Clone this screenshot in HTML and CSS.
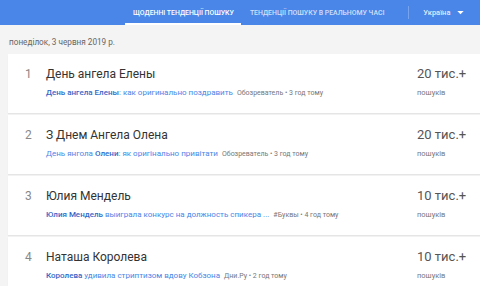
FILE: index.html
```html
<!DOCTYPE html>
<html lang="uk">
<head>
    <meta charset="UTF-8">
    <title>Google Trends</title>
    <link rel="stylesheet" href="styles.css">
</head>
<body>
    <header class="topbar">
        <nav class="tabs">
            <a class="tab active">Щоденні тенденції пошуку</a>
            <a class="tab realtime">Тенденції пошуку в реальному часі</a>
        </nav>
        <div class="divider"></div>
        <div class="geo">
            Україна
            <svg class="caret" width="7" height="4" viewBox="0 0 8 5"><path d="M0 0h8L4 4z" fill="#fff"/></svg>
        </div>
    </header>

    <main class="page">
        <div class="date">понеділок, 3 червня 2019 р.</div>

        <div class="feed">
            <div class="item">
                <div class="index">1</div>
                <div class="details">
                    <div class="title">День ангела Елены</div>
                    <div class="summary">
                        <span class="link"><b>День ангела Елены</b>: как оригинально поздравить</span>
                        <span class="source">Обозреватель • 3 год тому</span>
                    </div>
                </div>
                <div class="count">
                    <div class="value">20 тис.+</div>
                    <div class="label">пошуків</div>
                </div>
            </div>

            <div class="item">
                <div class="index">2</div>
                <div class="details">
                    <div class="title">З Днем Ангела Олена</div>
                    <div class="summary">
                        <span class="link">День янгола <b>Олени</b>: як оригінально привітати</span>
                        <span class="source">Обозреватель • 3 год тому</span>
                    </div>
                </div>
                <div class="count">
                    <div class="value">20 тис.+</div>
                    <div class="label">пошуків</div>
                </div>
            </div>

            <div class="item">
                <div class="index">3</div>
                <div class="details">
                    <div class="title">Юлия Мендель</div>
                    <div class="summary">
                        <span class="link"><b>Юлия Мендель</b> выиграла конкурс на должность спикера ...</span>
                        <span class="source">#Буквы • 4 год тому</span>
                    </div>
                </div>
                <div class="count">
                    <div class="value">10 тис.+</div>
                    <div class="label">пошуків</div>
                </div>
            </div>

            <div class="item">
                <div class="index">4</div>
                <div class="details">
                    <div class="title">Наташа Королева</div>
                    <div class="summary">
                        <span class="link"><b>Королева</b> удивила стриптизом вдову Кобзона</span>
                        <span class="source">Дни.Ру • 2 год тому</span>
                    </div>
                </div>
                <div class="count">
                    <div class="value">10 тис.+</div>
                    <div class="label">пошуків</div>
                </div>
            </div>
        </div>
    </main>
</body>
</html>
```

FILE: styles.css
```css
* {
    box-sizing: border-box;
}

body {
    margin: 0;
    background: #f4f4f4;
    font-family: Roboto, 'Noto Sans', sans-serif;
    overflow: hidden;
}

.topbar {
    height: 25px;
    background: #4a86e8;
    display: flex;
    align-items: stretch;
    padding-left: 125px;
    white-space: nowrap;
}

.tabs {
    display: flex;
    flex-shrink: 0;
}

.tab {
    display: flex;
    align-items: center;
    padding: 2px 7px 0 8px;
    color: rgba(255, 255, 255, 0.75);
    font-size: 6.9px;
    font-weight: 500;
    text-transform: uppercase;
    border-bottom: 2px solid transparent;
}

.tab.active {
    color: #fff;
    border-bottom-color: #fff;
}

.tab.realtime {
    padding-left: 9px;
}

.divider {
    width: 1px;
    background: rgba(255, 255, 255, 0.25);
    margin: 6px 0 6px 17px;
}

.geo {
    display: flex;
    align-items: center;
    gap: 7px;
    padding-left: 14px;
    color: rgba(255, 255, 255, 0.85);
    font-size: 7.5px;
    font-weight: 500;
}

.page {
    padding-left: 8px;
}

.date {
    font-size: 8.2px;
    color: #666;
    padding: 12px 0 0 1px;
    height: 29px;
}

.feed {
    display: flex;
    flex-direction: column;
    gap: 2px;
}

.item {
    height: 59px;
    background: #fff;
    display: flex;
    align-items: flex-start;
    padding-top: 12px;
    box-shadow: 0 1px 1px rgba(0, 0, 0, 0.06);
}

.index {
    width: 38px;
    padding-left: 17px;
    font-size: 12px;
    color: #888;
    line-height: 16px;
}

.details {
    flex: 1;
}

.title {
    font-size: 12px;
    color: #333;
    line-height: 16px;
}

.summary {
    margin-top: 5px;
    font-size: 8px;
    line-height: 12px;
    white-space: nowrap;
}

.link {
    color: #4a86e8;
}

.link b {
    font-weight: 500;
    color: #3367c7;
}

.source {
    color: #777;
    font-size: 7px;
    margin-left: 2px;
}

.count {
    width: 63px;
}

.value {
    font-size: 13px;
    color: #555;
    line-height: 16px;
}

.label {
    margin-top: 6px;
    font-size: 7.5px;
    color: #777;
}
```
